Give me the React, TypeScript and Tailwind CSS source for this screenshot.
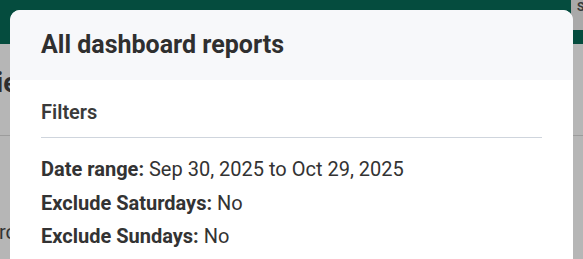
const filters = [
  { label: "Date range:", value: "Sep 30, 2025 to Oct 29, 2025" },
  { label: "Exclude Saturdays:", value: "No" },
  { label: "Exclude Sundays:", value: "No" },
];

export default function App() {
  return (
    <div className="relative w-[583px] h-[259px] overflow-hidden bg-[#b6b6b6] font-['Roboto',sans-serif]">
      {/* page behind the backdrop */}
      <div className="flex flex-col">
        <div className="h-[44px] bg-[#054c3e] flex justify-end">
          <div className="w-[12px] h-[30px] bg-[#a9a9a9] text-[12px] font-bold text-[#3a3a3a] leading-[14px] pl-[6px] overflow-hidden">
            S
          </div>
        </div>
        <div className="h-[92px] border-b border-[#9c9c9c] pt-[23px]">
          <div className="text-[27px] font-bold text-[#2e2e2e] leading-[32px] ml-[-4px]">ie</div>
        </div>
        <div className="pt-[84px] text-[20px] text-[#333] ml-[-1px] leading-[24px]">rc</div>
      </div>

      {/* modal */}
      <div className="absolute left-[10px] top-[10px] w-[563px] h-[270px] bg-white rounded-t-[10px] overflow-hidden">
        <div className="h-[70px] bg-[#f7f8fa] flex items-center px-[31px]">
          <h2 className="text-[25px] font-bold text-[#2f2f2f] leading-[30px]">All dashboard reports</h2>
        </div>
        <div className="px-[31px] pt-[20px]">
          <div className="text-[20px] font-semibold text-[#3a3a3a] pb-[13px] border-b border-[#cfd5dd] leading-[24px]">
            Filters
          </div>
          <div className="flex flex-col gap-[9.5px] pt-[19px]">
            {filters.map((f) => (
              <div key={f.label} className="text-[20px] leading-[24px] text-[#333]">
                <span className="font-bold">{f.label}</span> {f.value}
              </div>
            ))}
          </div>
        </div>
      </div>
    </div>
  );
}
